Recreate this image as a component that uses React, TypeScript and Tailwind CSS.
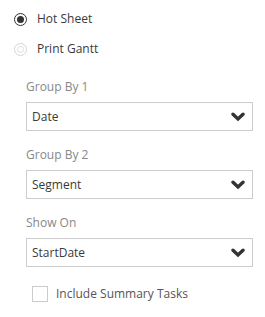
const Chevron = () => (
  <svg width="14" height="10" viewBox="0 0 14 10" className="text-[#333]">
    <polyline
      points="2,2.2 7,7 12,2.2"
      fill="none"
      stroke="currentColor"
      strokeWidth="3.4"
      strokeLinecap="round"
      strokeLinejoin="miter"
    />
  </svg>
);

const Radio = ({ label, checked }: { label: string; checked?: boolean }) => {
  return (
    <div className="flex items-center h-[20px]">
      <span
        className={
          checked
            ? "flex items-center justify-center w-[13px] h-[13px] rounded-full border border-[#333] bg-white"
            : "flex items-center justify-center w-[13px] h-[13px] rounded-full border border-[#d6d6d6] bg-white"
        }
      >
        {checked ? (
          <span className="w-[7px] h-[7px] rounded-full bg-[#333]" />
        ) : (
          <span className="w-[7px] h-[7px] rounded-full border border-[#e0e0e0]" />
        )}
      </span>
      <span className="ml-[10px] text-[12px] text-[#3a3a3a]">{label}</span>
    </div>
  );
};

const Select = ({ label, value }: { label: string; value: string }) => {
  return (
    <div className="flex flex-col">
      <span className="text-[12px] text-[#888] leading-[16px]">{label}</span>
      <div className="mt-[7px] flex items-center justify-between h-[29px] border border-[#cccccc] bg-white pl-[5px] pr-[7px]">
        <span className="text-[12px] text-[#3a3a3a]">{value}</span>
        <Chevron />
      </div>
    </div>
  );
};

const App = () => {
  return (
    <div
      className="w-[265px] h-[317px] bg-white"
      style={{ fontFamily: '"Open Sans", sans-serif' }}
    >
      <div className="pl-[14px] pt-[9px] flex flex-col gap-[10px]">
        <Radio label="Hot Sheet" checked />
        <Radio label="Print Gantt" />
      </div>
      <div className="pl-[26px] pr-[12px] pt-[20px] flex flex-col gap-[16px]">
        <Select label="Group By 1" value="Date" />
        <Select label="Group By 2" value="Segment" />
        <Select label="Show On" value="StartDate" />
      </div>
      <div className="pl-[32px] pt-[18px] flex items-center">
        <span className="w-[16px] h-[16px] border border-[#cccccc] bg-white" />
        <span className="ml-[8px] text-[12px] text-[#555]">Include Summary Tasks</span>
      </div>
    </div>
  );
};

export default App;
